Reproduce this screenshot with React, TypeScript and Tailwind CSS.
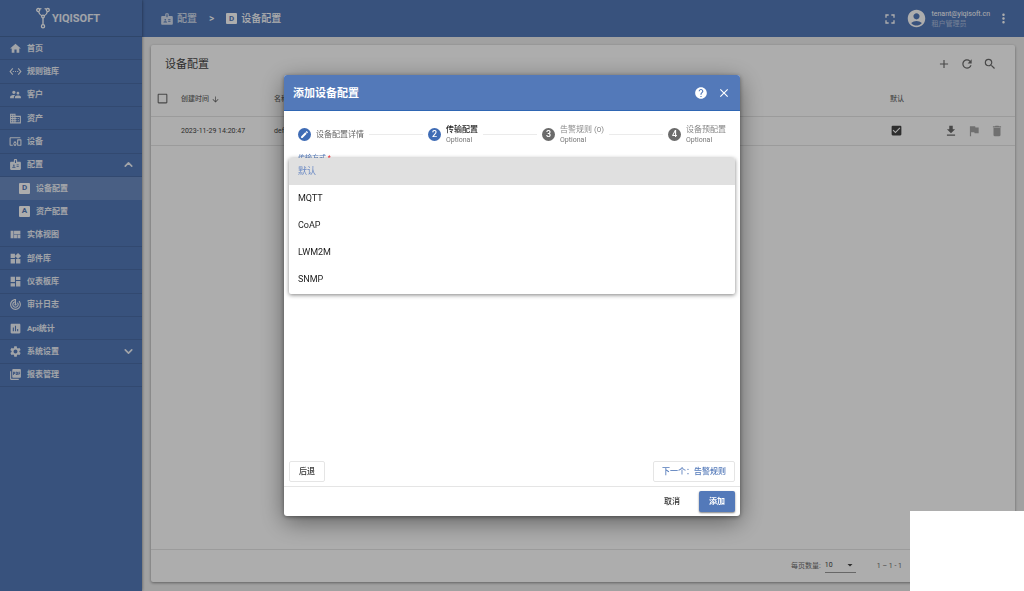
import React from "react";
import {
  MdAccountCircle,
  MdAdd,
  MdArrowDownward,
  MdArrowDropDown,
  MdBadge,
  MdCheckBox,
  MdCheckBoxOutlineBlank,
  MdClose,
  MdCreate,
  MdDashboard,
  MdDelete,
  MdDevicesOther,
  MdDomain,
  MdFileDownload,
  MdFlag,
  MdFullscreen,
  MdHelp,
  MdHome,
  MdInsertChart,
  MdMoreVert,
  MdPictureAsPdf,
  MdRefresh,
  MdSearch,
  MdSettings,
  MdSettingsEthernet,
  MdSupervisorAccount,
  MdTrackChanges,
  MdViewQuilt,
  MdWidgets,
} from "react-icons/md";
import type { IconType } from "react-icons";
import { ChevronDown, ChevronUp } from "lucide-react";
import clsx from "clsx";

type NavItem = {
  label: string;
  icon?: IconType;
  letter?: string;
  active?: boolean;
  expand?: "open" | "closed";
};

const navItems: NavItem[] = [
  { label: "首页", icon: MdHome },
  { label: "规则链库", icon: MdSettingsEthernet },
  { label: "客户", icon: MdSupervisorAccount },
  { label: "资产", icon: MdDomain },
  { label: "设备", icon: MdDevicesOther },
  { label: "配置", icon: MdBadge, expand: "open" },
  { label: "设备配置", letter: "D", active: true },
  { label: "资产配置", letter: "A" },
  { label: "实体视图", icon: MdViewQuilt },
  { label: "部件库", icon: MdWidgets },
  { label: "仪表板库", icon: MdDashboard },
  { label: "审计日志", icon: MdTrackChanges },
  { label: "Api统计", icon: MdInsertChart },
  { label: "系统设置", icon: MdSettings, expand: "closed" },
  { label: "报表管理", icon: MdPictureAsPdf },
];

const steps = [
  { label: "设备配置详情", state: "done" },
  { label: "传输配置", state: "current", optional: true },
  { label: "告警规则 (0)", state: "next", optional: true },
  { label: "设备预配置", state: "next", optional: true },
];

const transports = ["默认", "MQTT", "CoAP", "LWM2M", "SNMP"];

function LetterBox({ letter }: { letter: string }) {
  return (
    <span className="flex size-[11px] shrink-0 items-center justify-center rounded-[1px] bg-white text-[8px] leading-none font-bold text-[#5379b9]">
      {letter}
    </span>
  );
}

function Logo() {
  return (
    <svg viewBox="0 0 14 22" className="h-[22px] w-[14px]" fill="none" stroke="white" strokeWidth="1.3">
      <circle cx="2.2" cy="3" r="1.5" />
      <circle cx="11.8" cy="3" r="1.5" />
      <circle cx="7" cy="9.5" r="1.3" />
      <circle cx="7" cy="19.2" r="1.6" />
      <path d="M5.4 1.5 3.6 2.2M8.6 1.5l1.8.7M2.6 4.5c.3 2.2 1.6 3.6 3.4 4.5M11.4 4.5c-.3 2.2-1.6 3.6-3.4 4.5M7 10.8v6.8" />
    </svg>
  );
}

function Sidebar() {
  return (
    <aside className="z-10 flex w-[142px] shrink-0 flex-col bg-[#5379b9] text-white/90 shadow-[0_0_3px_rgba(0,0,0,0.5)]">
      <div className="flex h-[37px] items-center gap-[2px] border-b border-black/15 pl-9">
        <Logo />
        <span className="pt-[2px] text-[11px] font-bold">YIQISOFT</span>
      </div>
      <nav>
        <ul className="grid h-[350px] grid-rows-[repeat(15,minmax(0,1fr))]">
          {navItems.map((item) => (
            <li
              key={item.label}
              className={clsx("border-b", item.letter ? "border-transparent" : "border-black/10", item.active && "bg-white/15")}
            >
              <a
                href="#"
                className={clsx(
                  "flex h-full items-center text-[8px] font-bold",
                  item.letter ? "gap-[6px] pl-[19px]" : "gap-[5px] pl-[9px]"
                )}
              >
                {item.icon && <item.icon className="size-[13px]" />}
                {item.letter && <LetterBox letter={item.letter} />}
                <span className="flex-1 pt-px">{item.label}</span>
                {item.expand === "open" && <ChevronUp className="mr-[7px] size-[13px]" strokeWidth={3} />}
                {item.expand === "closed" && <ChevronDown className="mr-[7px] size-[13px]" strokeWidth={3} />}
              </a>
            </li>
          ))}
        </ul>
      </nav>
    </aside>
  );
}

function Topbar() {
  return (
    <header className="flex h-[37px] shrink-0 items-center bg-[#5379b9] pr-[13px] pl-[18px] text-white shadow-[0_1px_3px_rgba(0,0,0,0.4)]">
      <nav className="flex flex-1 items-center text-[10px] font-medium">
        <a href="#" className="flex items-center gap-[3px] opacity-75">
          <MdBadge className="size-[14px]" />
          配置
        </a>
        <span className="mx-[12px]">&gt;</span>
        <a href="#" className="flex items-center gap-[4px]">
          <LetterBox letter="D" />
          设备配置
        </a>
      </nav>
      <button type="button" aria-label="全屏" className="mr-[8px]">
        <MdFullscreen className="size-4" />
      </button>
      <MdAccountCircle className="mr-[4px] size-[21px]" />
      <div className="mr-[6px] text-[7px] leading-[10px]">
        <div>tenant@yiqisoft.cn</div>
        <div className="opacity-50">租户管理员</div>
      </div>
      <button type="button" aria-label="更多">
        <MdMoreVert className="size-[15px]" />
      </button>
    </header>
  );
}

function ProfilesCard() {
  return (
    <section className="flex flex-1 flex-col rounded-[2px] bg-white text-[#6b6b6b] shadow-[0_1px_3px_rgba(0,0,0,0.4)]">
      <div className="flex h-[37px] items-center gap-[9px] pr-[18px] pl-[14px]">
        <h1 className="flex-1 pt-[3px] text-[11px] text-[#444]">设备配置</h1>
        <button type="button" aria-label="添加"><MdAdd className="size-[14px]" /></button>
        <button type="button" aria-label="刷新"><MdRefresh className="size-[14px]" /></button>
        <button type="button" aria-label="搜索"><MdSearch className="size-[14px]" /></button>
      </div>
      <table className="w-full table-fixed text-left text-[7px]">
        <thead>
          <tr className="h-[34px] border-b border-black/10">
            <th className="w-[30px] pl-[5px]">
              <label className="grid size-[13px]">
                <input type="checkbox" aria-label="全选" className="col-start-1 row-start-1 appearance-none" />
                <MdCheckBoxOutlineBlank className="col-start-1 row-start-1 size-[13px]" />
              </label>
            </th>
            <th className="w-[93px] font-medium">
              <span className="flex items-center gap-[2px] pt-px">
                创建时间 <MdArrowDownward className="size-[9px]" />
              </span>
            </th>
            <th className="font-medium">名称</th>
            <th className="w-[60px] pl-[20px] font-medium">默认</th>
            <th className="w-[85px]" />
          </tr>
        </thead>
        <tbody>
          <tr className="h-[29px] border-b border-black/10 text-[#444]">
            <td />
            <td className="pt-px">2023-11-29 14:20:47</td>
            <td className="pt-px">default</td>
            <td className="pl-[20px]">
              <label className="grid size-[13px]">
                <input type="checkbox" defaultChecked aria-label="默认" className="col-start-1 row-start-1 appearance-none" />
                <MdCheckBox className="col-start-1 row-start-1 size-[13px]" />
              </label>
            </td>
            <td>
              <div className="flex justify-end gap-[9px] pr-[11px] text-[#6b6b6b]">
                <button type="button" aria-label="导出"><MdFileDownload className="size-[14px]" /></button>
                <button type="button" disabled aria-label="设为默认" className="opacity-60"><MdFlag className="size-[14px]" /></button>
                <button type="button" disabled aria-label="删除" className="opacity-60"><MdDelete className="size-[14px]" /></button>
              </div>
            </td>
          </tr>
        </tbody>
      </table>
      <footer className="mt-auto flex h-[33px] items-center justify-end border-t border-black/10 pr-[113px] text-[7px]">
        <label htmlFor="page-size" className="mr-[4px] pt-px">每页数量:</label>
        <div className="relative mr-[21px] border-b border-black/40">
          <select id="page-size" className="h-[13px] w-[31px] appearance-none text-[7px] text-[#444]">
            <option>10</option>
          </select>
          <MdArrowDropDown className="pointer-events-none absolute top-0 right-0 size-3 text-[#444]" />
        </div>
        <span>1 – 1 - 1</span>
      </footer>
    </section>
  );
}

function Stepper() {
  return (
    <ol className="flex h-[43px] shrink-0 items-center px-[14px] pt-[3px]">
      {steps.map((step, i) => (
        <React.Fragment key={step.label}>
          {i > 0 && <li aria-hidden className="mx-[5px] h-px flex-1 bg-black/8" />}
          <li className="flex items-center gap-[5px]">
            <span
              className={clsx(
                "flex size-[13px] items-center justify-center rounded-full text-[9px] leading-none font-medium text-white",
                step.state === "next" ? "bg-[#6b6b6b]" : "bg-[#3f6cb5]"
              )}
            >
              {step.state === "done" ? <MdCreate className="size-[9px]" /> : i + 1}
            </span>
            <div
              className={clsx(
                "pt-[2px] text-[8px] leading-[10px]",
                step.state === "done" && "text-[#666]",
                step.state === "current" && "font-medium text-[#222]",
                step.state === "next" && "text-[#888]"
              )}
            >
              <div>{step.label}</div>
              {step.optional && <div className="text-[7px] font-normal text-[#777]">Optional</div>}
            </div>
          </li>
        </React.Fragment>
      ))}
    </ol>
  );
}

function AddProfileDialog() {
  return (
    <div
      role="dialog"
      aria-labelledby="dialog-title"
      className="flex h-[441px] w-[456px] flex-col rounded-[3px] bg-white shadow-[0_6px_24px_rgba(0,0,0,0.45),0_1px_4px_rgba(0,0,0,0.4)]"
    >
      <div className="flex h-[36px] shrink-0 items-center rounded-t-[3px] border-b border-[#2f66b3] bg-[#5379b9] px-[9px] text-white">
        <h2 id="dialog-title" className="flex-1 pt-[3px] text-[11px] font-bold">添加设备配置</h2>
        <button type="button" aria-label="帮助" className="mr-[9px]"><MdHelp className="size-[14px]" /></button>
        <button type="button" aria-label="关闭"><MdClose className="size-[14px]" /></button>
      </div>
      <Stepper />
      <div className="relative flex-1 px-[5px]">
        <div className="pl-[9px] text-[7px] leading-[8px] text-[#5379b9]">
          传输方式 <span className="text-red-500">*</span>
        </div>
        {/* open transport type menu */}
        <ul
          role="listbox"
          aria-label="传输方式"
          className="absolute inset-x-[5px] top-[4px] overflow-hidden rounded-[2px] bg-white text-[9px] text-[#222] shadow-[0_1px_4px_rgba(0,0,0,0.5)]"
        >
          {transports.map((name, i) => (
            <li
              key={name}
              role="option"
              aria-selected={i === 0}
              className={clsx("flex h-[27px] items-center px-[9px] pt-px", i === 0 && "bg-[#e0e0e0] text-[#6b8ac4]")}
            >
              {name}
            </li>
          ))}
          <li aria-hidden className="h-px" />
        </ul>
      </div>
      <div className="flex justify-between px-[5px] pb-[4px] text-[8px] font-medium">
        <button type="button" className="h-[21px] rounded-[2px] border border-black/10 px-[9px] text-[#333]">后退</button>
        <button type="button" className="h-[21px] rounded-[2px] border border-black/10 px-[8px] text-[#5379b9]">下一个：告警规则</button>
      </div>
      <div className="flex h-[30px] shrink-0 items-center justify-end gap-[9px] border-t border-black/10 pr-[5px] text-[8px] font-medium">
        <button type="button" className="h-[21px] px-[10px] text-[#333]">取消</button>
        <button type="button" className="h-[21px] rounded-[2px] bg-[#5379b9] px-[10px] font-bold text-white shadow-[0_1px_2px_rgba(0,0,0,0.5)]">添加</button>
      </div>
    </div>
  );
}

export default function App() {
  return (
    <div className="flex min-h-screen font-['Roboto','Noto_Sans_CJK_SC',sans-serif]" lang="zh-CN">
      <Sidebar />
      <div className="flex min-w-0 flex-1 flex-col">
        <Topbar />
        <main className="flex flex-1 flex-col bg-[#eee] px-[9px] pt-[8px] pb-[9px]">
          <ProfilesCard />
        </main>
      </div>
      <div className="fixed inset-0 z-20 flex items-center justify-center bg-black/32">
        <AddProfileDialog />
      </div>
      <div className="fixed right-0 bottom-0 z-30 h-20 w-[114px] bg-white" />
    </div>
  );
}
